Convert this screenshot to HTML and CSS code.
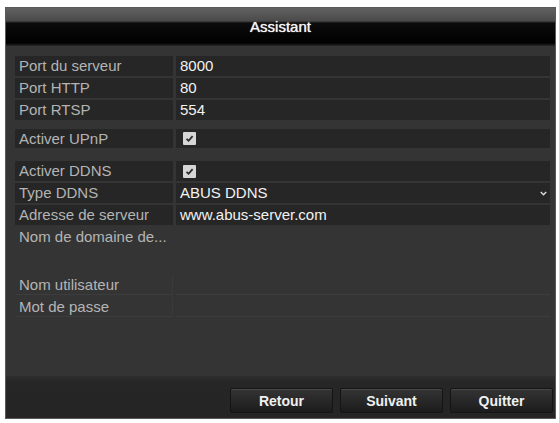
FILE: index.html
```html
<!DOCTYPE html>
<html lang="fr">
  <head>
    <meta charset="UTF-8" />
    <meta name="viewport" content="width=device-width, initial-scale=1.0" />
    <title>Assistant</title>

    <link rel="stylesheet" href="styles.css">
  </head>
  <body>
    <div class="window">
      <div class="title">Assistant</div>

      <div class="content">
        <div class="row">
          <div class="cell label">Port du serveur</div>
          <div class="cell value">8000</div>
        </div>
        <div class="row">
          <div class="cell label">Port HTTP</div>
          <div class="cell value">80</div>
        </div>
        <div class="row">
          <div class="cell label">Port RTSP</div>
          <div class="cell value">554</div>
        </div>

        <div class="row group short">
          <div class="cell label">Activer UPnP</div>
          <div class="cell value">
            <span class="check">
              <svg width="13" height="13" viewBox="0 0 13 13">
                <path d="M3.5 6.8 L5.6 8.8 L9.6 4.2" fill="none" stroke="#2a2a2a" stroke-width="1.8" />
              </svg>
            </span>
          </div>
        </div>

        <div class="row group-b">
          <div class="cell label">Activer DDNS</div>
          <div class="cell value">
            <span class="check">
              <svg width="13" height="13" viewBox="0 0 13 13">
                <path d="M3.5 6.8 L5.6 8.8 L9.6 4.2" fill="none" stroke="#2a2a2a" stroke-width="1.8" />
              </svg>
            </span>
          </div>
        </div>
        <div class="row">
          <div class="cell label">Type DDNS</div>
          <div class="cell value select">
            <span>ABUS DDNS</span>
            <svg class="arrow" width="7" height="5" viewBox="0 0 7 5">
              <path d="M0.8 1 L3.5 3.8 L6.2 1" fill="none" stroke="#ddd" stroke-width="1.4" />
            </svg>
          </div>
        </div>
        <div class="row">
          <div class="cell label">Adresse de serveur</div>
          <div class="cell value">www.abus-server.com</div>
        </div>

        <div class="row plain">
          <div class="cell label">Nom de domaine de...</div>
          <div class="cell value"></div>
        </div>
        <div class="row plain blank">
          <div class="cell label"></div>
          <div class="cell value"></div>
        </div>
        <div class="row plain lined">
          <div class="cell label">Nom utilisateur</div>
          <div class="cell value"></div>
        </div>
        <div class="row plain lined">
          <div class="cell label">Mot de passe</div>
          <div class="cell value"></div>
        </div>
      </div>

      <div class="footer">
        <button class="btn">Retour</button>
        <button class="btn">Suivant</button>
        <button class="btn">Quitter</button>
      </div>
    </div>
  </body>
</html>
```

FILE: styles.css
```css
body {
  margin: 0;
  background-color: white;
  font-family: "Liberation Sans", Arial, sans-serif;
}

.window {
  margin: 7px 0 0 5px;
  width: 549px;
  height: 410px;
  border: 1px solid #5a5a5a;
  background-color: #333333;
  display: flex;
  flex-direction: column;
}

.title {
  height: 38px;
  background: linear-gradient(
    to bottom,
    #626262 0px,
    #4a4a4a 13px,
    #0c0c0c 15px,
    #000000 35px,
    #2a2a2a 38px
  );
  color: #f4f4f4;
  font-size: 15px;
  text-align: center;
  line-height: 38px;
  padding-bottom: 2px;
  box-sizing: border-box;
  text-shadow: 0 0 1px #ffffff;
}

.content {
  flex: 1;
  padding: 10px 5px 0 9px;
  background-color: #343434;
}

.row {
  display: grid;
  grid-template-columns: 158px 1fr;
  column-gap: 3px;
  height: 20px;
  margin-bottom: 2px;
}

.row.group {
  margin-top: 9px;
  height: 19px;
}

.row.group-b {
  margin-top: 13px;
}

.cell {
  background-color: #262626;
  font-size: 15px;
  line-height: 20px;
  white-space: nowrap;
  overflow: hidden;
}

.label {
  color: #b4b4b4;
  padding-left: 4px;
}

.value {
  color: #f2f2f2;
  padding-left: 4px;
  display: flex;
  align-items: center;
}

.check {
  display: inline-flex;
  width: 13px;
  height: 13px;
  margin-left: 3px;
  background-color: #d6d6d6;
  border-radius: 1px;
}

.select {
  justify-content: space-between;
  padding-right: 3px;
}

.arrow {
  margin-top: 1px;
}

.row.plain .cell {
  background-color: transparent;
}

.row.blank {
  height: 24px;
}

.row.lined .cell {
  border-bottom: 1px solid #3d3d3d;
}

.row.lined .label {
  border-right: 1px solid #3a3a3a;
}

.footer {
  height: 42px;
  background: linear-gradient(to bottom, #2e2e2e 0px, #262626 6px, #252525 100%);
  display: flex;
  justify-content: flex-end;
  align-items: flex-start;
  column-gap: 7px;
  padding: 12px 2px 0 0;
  box-sizing: border-box;
}

.btn {
  width: 103px;
  height: 25px;
  background: linear-gradient(to bottom, #343434, #1c1c1c);
  border: 1px solid #141414;
  box-shadow: inset 0 1px 0 #484848;
  border-radius: 2px;
  color: #f0f0f0;
  font-family: "Liberation Sans", Arial, sans-serif;
  font-size: 14px;
  font-weight: bold;
  padding: 0;
}
```
